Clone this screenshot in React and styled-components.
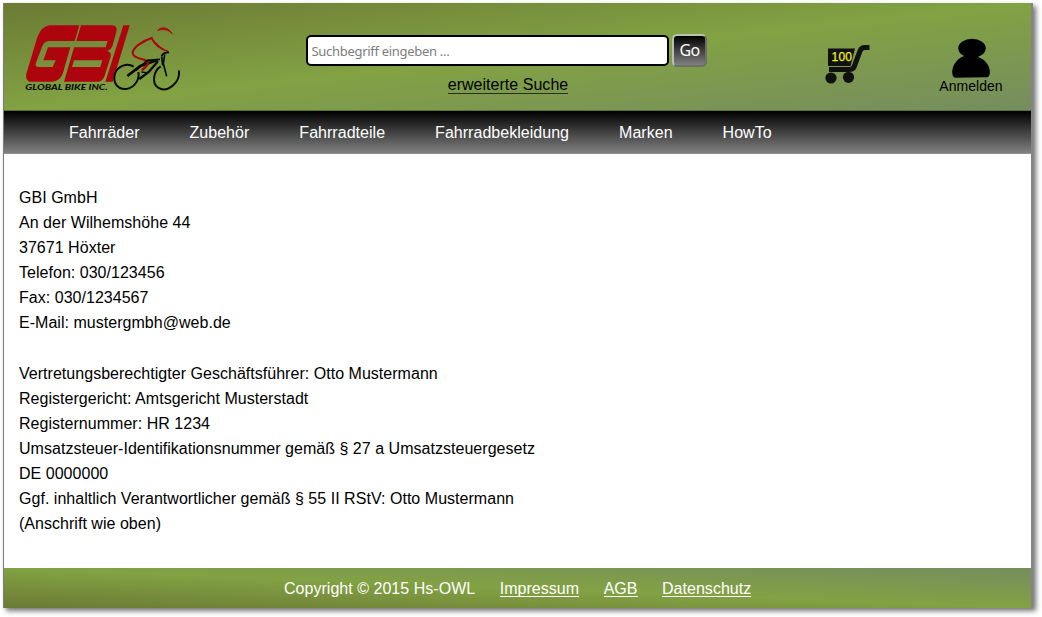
import React from "react";
import styled, { createGlobalStyle } from "styled-components";

const GlobalStyle = createGlobalStyle`
  * { box-sizing: border-box; }
  html, body { height: 617px; }
  body { margin: 0; background: #fff; overflow: hidden; }
  #root { display: flow-root; height: 617px; }
  body, input, button { font-family: "Liberation Sans", Arial, sans-serif; }
`;

const Page = styled.div`
  width: 1030px;
  height: 605px;
  margin: 3px 0 0 3px;
  display: flex;
  flex-direction: column;
  background: #fff;
  border-left: 1px solid #7d7d7d;
  border-right: 2px solid #848484;
  box-shadow: 3px 3px 5px rgba(0, 0, 0, 0.55);
  font-size: 16px;
  letter-spacing: 0.03px;
  color: #000;
`;

const Header = styled.header`
  height: 108px;
  flex: none;
  display: flex;
  background: linear-gradient(to bottom right, #6b7a34, #82a243 50%, #768d5f);
  border-bottom: 1px solid #5c7132;
`;

const LogoLink = styled.a`
  width: 302px;
  padding: 17px 0 0 16px;
  svg { display: block; }
`;

const Search = styled.form`
  width: 402px;
  padding-top: 31px;
  display: flex;
  flex-direction: column;
  align-items: center;
`;

const SearchRow = styled.div`
  display: flex;
  width: 100%;
  gap: 3px;
`;

const SearchInput = styled.input`
  width: 363px;
  height: 31px;
  margin-top: 1px;
  padding: 0 4px 0 3.5px;
  border: 2px solid #000;
  border-radius: 5px;
  background: #fff;
  font: 13px "Noto Sans", "Open Sans", sans-serif;
  letter-spacing: -0.3px;
  outline: none;
  &::placeholder { color: #7d7d7d; opacity: 1; }
`;

const GoButton = styled.button`
  width: 35px;
  height: 33px;
  padding: 0 0 2px;
  border: 2px solid;
  border-color: #b9c0b0 #6c7068 #6c7068 #b9c0b0;
  border-radius: 5px;
  background: linear-gradient(#000, #808080);
  color: #fff;
  font: 16px "Noto Sans", "Open Sans", sans-serif;
  letter-spacing: -0.6px;
`;

const AdvancedLink = styled.a`
  margin: 8px 0 0 2px;
  line-height: 19px;
  border-bottom: 1px solid #26301a;
  height: 19px;
`;

const CartLink = styled.a`
  width: 48px;
  margin: 39px 0 0 114px;
  svg { display: block; }
`;

const Login = styled.a`
  width: 70px;
  margin: 35px 0 0 66px;
  display: flex;
  flex-direction: column;
  align-items: center;
  font-size: 14px;
  line-height: 16px;
  svg { display: block; }
`;

const Nav = styled.nav`
  height: 43px;
  flex: none;
  display: flex;
  gap: 50px;
  padding-left: 65px;
  background: linear-gradient(#000, #808080);
  border-bottom: 1px solid #909090;
  color: #fff;
  line-height: 43px;
`;

const Content = styled.main`
  flex: 1;
  padding: 31px 15px 0;
  line-height: 25.08px;
  white-space: pre-line;
`;

const Footer = styled.footer`
  height: 40px;
  flex: none;
  display: flex;
  padding-left: 280px;
  gap: 24.5px;
  background: linear-gradient(to top right, #6b7a34, #82a243 50%, #768d5f);
  color: #fff;
  line-height: 41px;
`;

const FooterLink = styled.a`
  height: 29px;
  border-bottom: 1px solid #fff;
`;

const Logo = () => (
  <svg width="164" height="76" viewBox="60 60 492 228" fill="none">
    <g fill="#ad040d">
      <path
        fillRule="evenodd"
        d="M149 76H238L224 123H146Q132 124 127 138L108 188Q103 201 117 201H158L167 181H130L144 142H211L189 219Q180 244 156 245H91Q75 242 79 221L112 112Q124 79 149 76Z"
      />
      <path
        fillRule="evenodd"
        d="M243 76H335Q354 77 349 96L339 132Q335 149 321 153Q336 156 332 170L314 227Q308 245 292 245H192L222 142H317L323 123H229ZM222 181L216 201H301L307 181Z"
      />
      <path d="M370 76H389L338 245H316Z" />
    </g>
    <text x="76" y="271" fill="#0b0d05" fontFamily="Lato, Liberation Sans, sans-serif" fontWeight="900" fontStyle="italic" fontSize="25" textLength="247" lengthAdjust="spacingAndGlyphs">GLOBAL BIKE INC.</text>
    <path d="M473 92C482 77 507 82 517 102C503 88 490 86 473 92Z" fill="#ad040d" stroke="#ad040d" strokeWidth="2" />
    <path d="M453 112Q475 144 504 154Q468 146 453 112Z" fill="#ad040d" stroke="#ad040d" strokeWidth="4" />
    <path d="M458 113C430 121 397 143 398 159C400 179 439 174 445 187C447 195 434 202 426 211" stroke="#ad040d" strokeWidth="6" />
    <g stroke="#090b06">
      <path d="M401 200C382 188 354 197 345 220C337 250 354 269 378 267C404 264 420 237 415 216" strokeWidth="6" />
      <path d="M482 199C461 212 454 249 474 263C503 280 541 248 537 211" strokeWidth="6" />
      <path d="M382 228L421 198L473 180" strokeWidth="8" />
      <path d="M408 211L442 181L480 178" strokeWidth="5" />
      <path d="M418 237L447 215L474 184" strokeWidth="7" />
      <path d="M494 164L490 190L500 229" strokeWidth="5" />
      <path d="M485 168Q489 158 507 157" strokeWidth="6" />
      <path d="M485 169L488 196" strokeWidth="5" />
      <path d="M424 216L439 218" strokeWidth="4" />
    </g>
    <path d="M445 187C445 195 434 202 426 211" stroke="#ad040d" strokeWidth="6" />
  </svg>
);

const Cart = () => (
  <svg width="48" height="46" viewBox="822 42 48 46">
    <path d="M828 48.5H855L850.5 66H828Z" fill="#111" />
    <path d="M869.5 47.5H864.5Q861.5 47.5 860 51L854 67Q853 69.5 849 69.5H829" fill="none" stroke="#111" strokeWidth="5" />
    <circle cx="831" cy="78" r="5.6" fill="#111" />
    <circle cx="848.5" cy="77.3" r="5.6" fill="#111" />
    <text x="831.5" y="61" fontFamily="Liberation Sans, Arial, sans-serif" fontSize="12" fill="#f0f018" stroke="#f0f018" strokeWidth="0.25" textLength="20.5">100</text>
  </svg>
);

const Person = () => (
  <svg width="40" height="40" viewBox="951 38 40 40">
    <ellipse cx="972" cy="48.3" rx="13.7" ry="9.5" />
    <path d="M967 55H977L979 57.5C987 60 992 70 989 76Q988 77.7 985 77.3L955 77.7Q952 77 952.2 71C953 64 958 58 964 56Z" />
  </svg>
);

const categories = ["Fahrräder", "Zubehör", "Fahrradteile", "Fahrradbekleidung", "Marken", "HowTo"];

const imprint = `GBI GmbH
An der Wilhemshöhe 44
37671 Höxter
Telefon: 030/123456
Fax: 030/1234567
E-Mail: mustergmbh@web.de

Vertretungsberechtigter Geschäftsführer: Otto Mustermann
Registergericht: Amtsgericht Musterstadt
Registernummer: HR 1234
Umsatzsteuer-Identifikationsnummer gemäß § 27 a Umsatzsteuergesetz
DE 0000000
Ggf. inhaltlich Verantwortlicher gemäß § 55 II RStV: Otto Mustermann
(Anschrift wie oben)`;

export default function App() {
  return (
    <>
      <GlobalStyle />
      <Page>
        <Header>
          <LogoLink><Logo /></LogoLink>
          <Search>
            <SearchRow>
              <SearchInput placeholder="Suchbegriff eingeben ..." />
              <GoButton type="button">Go</GoButton>
            </SearchRow>
            <AdvancedLink>erweiterte Suche</AdvancedLink>
          </Search>
          <CartLink><Cart /></CartLink>
          <Login><Person />Anmelden</Login>
        </Header>
        <Nav>{categories.map((name) => <a key={name}>{name}</a>)}</Nav>
        <Content>{imprint}</Content>
        <Footer>
          <span>Copyright © 2015 Hs-OWL</span>
          <FooterLink>Impressum</FooterLink>
          <FooterLink>AGB</FooterLink>
          <FooterLink>Datenschutz</FooterLink>
        </Footer>
      </Page>
    </>
  );
}
